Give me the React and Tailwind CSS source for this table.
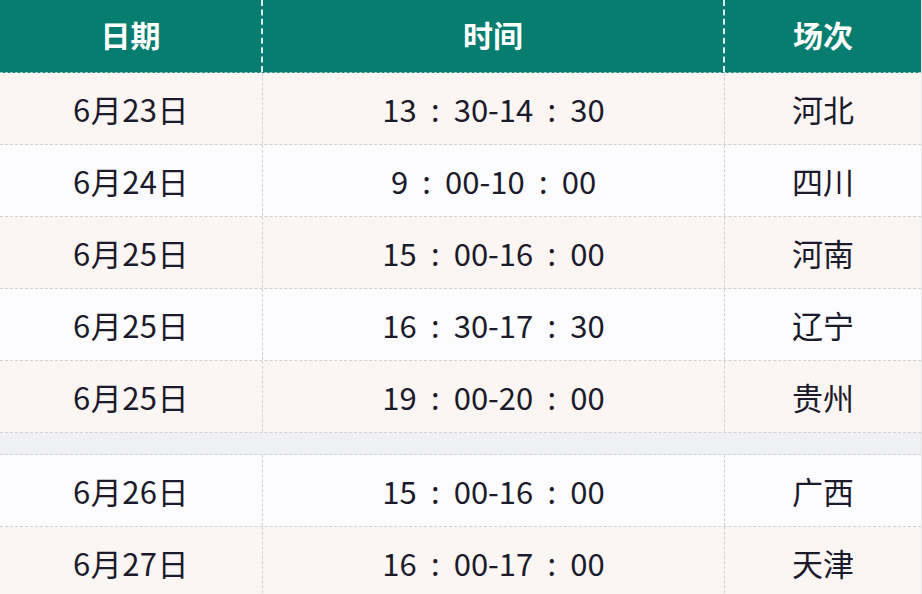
import React from "react";

const ROWS = [
  { date: "6月23日", time: ["13", "30-14", "30"], place: "河北", bg: "bg-[#fbf5f3]" },
  { date: "6月24日", time: ["9", "00-10", "00"], place: "四川", bg: "bg-[#fcfcfe]" },
  { date: "6月25日", time: ["15", "00-16", "00"], place: "河南", bg: "bg-[#fbf5f3]" },
  { date: "6月25日", time: ["16", "30-17", "30"], place: "辽宁", bg: "bg-[#fcfcfe]" },
  { date: "6月25日", time: ["19", "00-20", "00"], place: "贵州", bg: "bg-[#fbf5f3]" },
  { gap: true },
  { date: "6月26日", time: ["15", "00-16", "00"], place: "广西", bg: "bg-[#fcfcfe]" },
  { date: "6月27日", time: ["16", "00-17", "00"], place: "天津", bg: "bg-[#fbf5f3]" },
];

const FONT = { fontFamily: '"Noto Sans CJK SC", "Noto Sans", sans-serif' };

// full-width colon drawn centred in its own box, as in the source
function Colon() {
  return <span className="inline-block w-[37px] text-center">:</span>;
}

function Row({ row }) {
  if (row.gap) {
    return <div className="h-[22px] bg-[#eef0f3] border-b border-dashed border-[#d0d0d0]" />;
  }
  const [a, b, c] = row.time;
  return (
    <div className={`grid grid-cols-[263px_462px_1fr] h-[72px] border-b border-dashed border-[#d0d0d0] ${row.bg}`}>
      <div className="flex items-center justify-center border-r border-dashed border-[#d0d0d0] tracking-[0.5px]">{row.date}</div>
      <div className="flex items-center justify-center border-r border-dashed border-[#d0d0d0]">
        <span className="whitespace-nowrap">
          {a}
          <Colon />
          {b}
          <Colon />
          {c}
        </span>
      </div>
      <div className="flex items-center justify-center">{row.place}</div>
    </div>
  );
}

export default function App() {
  return (
    <div className="w-[922px] h-[594px] overflow-hidden bg-white text-[31px] leading-none text-[#1c1b2b]" style={FONT}>
      <div className="border-r border-[#e6e6e6]">
        <div className="grid grid-cols-[263px_462px_1fr] h-[73px] bg-[#077d6f] text-white text-[30px] font-bold border-b border-dashed border-[#9cc9c2]">
          <div className="flex items-center justify-center pb-1 border-r-2 border-dashed border-[#d8f0ec]">日期</div>
          <div className="flex items-center justify-center pb-1 border-r-2 border-dashed border-[#d8f0ec]">时间</div>
          <div className="flex items-center justify-center pb-1">场次</div>
        </div>
        {ROWS.map((row, i) => (
          <Row key={i} row={row} />
        ))}
      </div>
    </div>
  );
}
